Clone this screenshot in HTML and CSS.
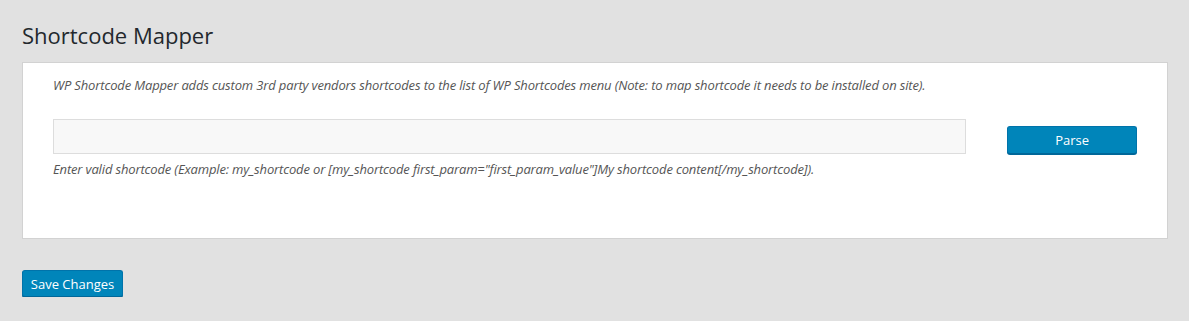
FILE: index.html
```html
<!DOCTYPE html>
<html lang="en">
<head>
    <meta charset="UTF-8">
    <link rel="stylesheet" href="styles.css">
</head>
<body>
    <div class="wrap">
        <h1 class="page-title">Shortcode Mapper</h1>
        <div class="panel">
            <p class="desc">WP Shortcode Mapper adds custom 3rd party vendors shortcodes to the list of WP Shortcodes menu (Note: to map shortcode it needs to be installed on site).</p>
            <div class="parse-row">
                <input type="text" class="shortcode-input">
                <button class="btn btn-parse">Parse</button>
            </div>
            <p class="help">Enter valid shortcode (Example: my_shortcode or [my_shortcode first_param="first_param_value"]My shortcode content[/my_shortcode]).</p>
        </div>
        <button class="btn btn-save">Save Changes</button>
    </div>
</body>
</html>
```

FILE: styles.css
```css
body {
   margin: 0;
   background: #e1e1e1;
   font-family: "Open Sans", sans-serif;
   color: #444;
}
.wrap {
   padding: 21px 21px 0 22px;
}
.page-title {
   margin: 0 0 12px 0;
   font-size: 22px;
   font-weight: 400;
   line-height: 29px;
   color: #23282d;
}
.panel {
   background: #fff;
   border: 1px solid #d2d2d2;
   height: 175px;
   padding: 0 30px;
}
.desc {
   margin: 13px 0 0 0;
   font-size: 13px;
   font-style: italic;
   color: #555;
   letter-spacing: -0.15px;
   line-height: 18px;
}
.parse-row {
   display: flex;
   align-items: flex-end;
   margin-top: 25px;
}
.shortcode-input {
   width: 914px;
   height: 35px;
   box-sizing: border-box;
   border: 1px solid #ddd;
   background: #f8f8f8;
   margin: 0;
}
.btn {
   font-family: "Open Sans", sans-serif;
   font-size: 13px;
   color: #fff;
   background: #0085ba;
   border: 1px solid #0073aa;
   border-bottom-color: #006799;
   box-shadow: 0 1px 0 #006799;
   border-radius: 3px;
   height: 28px;
   box-sizing: border-box;
   cursor: pointer;
}
.btn-parse {
   width: 130px;
   margin-left: 41px;
}
.help {
   margin: 6px 0 0 0;
   font-size: 13px;
   font-style: italic;
   color: #555;
   letter-spacing: -0.15px;
   line-height: 18px;
}
.btn-save {
   margin-top: 31px;
   width: 101px;
   height: 27px;
   padding: 0;
}
```
